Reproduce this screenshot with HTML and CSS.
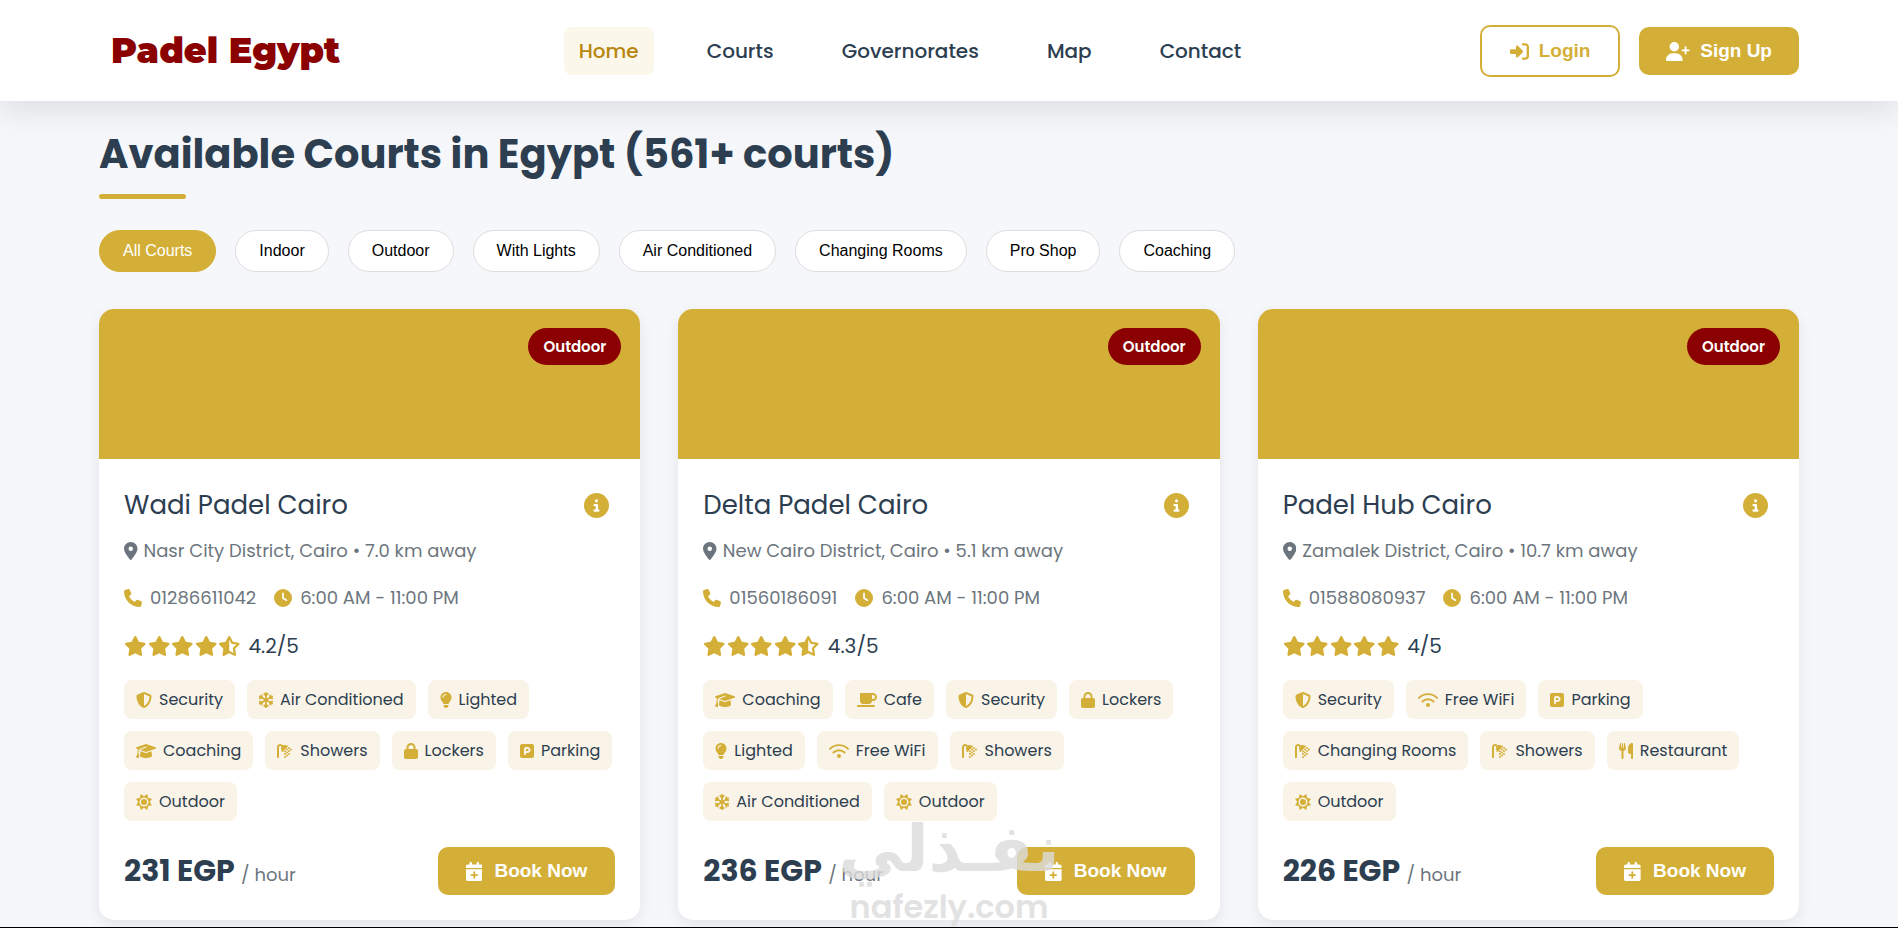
FILE: index.html
```html
<!DOCTYPE html>
<html lang="en">
<head>
<meta charset="utf-8">
<meta name="viewport" content="width=device-width, initial-scale=1">
<title>Padel Egypt</title>
<link rel="stylesheet" href="styles.css">
</head>
<body>
<svg class="sprite" aria-hidden="true">
  <defs>
    <path id="i-login" d="M217.9 105.9L340.7 228.7c7.2 7.2 11.3 17.1 11.3 27.3s-4.1 20.1-11.3 27.3L217.9 406.1c-6.4 6.4-15 9.9-24 9.9c-18.7 0-33.9-15.2-33.9-33.9l0-62.1L32 320c-17.7 0-32-14.3-32-32l0-64c0-17.7 14.3-32 32-32l128 0 0-62.1c0-18.7 15.2-33.9 33.9-33.9c9 0 17.6 3.6 24 9.9zM352 416l64 0c17.7 0 32-14.3 32-32l0-256c0-17.7-14.3-32-32-32l-64 0c-17.7 0-32-14.3-32-32s14.3-32 32-32l64 0c53 0 96 43 96 96l0 256c0 53-43 96-96 96l-64 0c-17.7 0-32-14.3-32-32s14.3-32 32-32z"/>
    <path id="i-user" d="M96 128a128 128 0 1 1 256 0A128 128 0 1 1 96 128zM0 482.3C0 383.8 79.8 304 178.3 304l91.4 0C368.2 304 448 383.8 448 482.3c0 16.4-13.3 29.7-29.7 29.7L29.7 512C13.3 512 0 498.7 0 482.3zM504 312l0-64-64 0c-13.3 0-24-10.7-24-24s10.7-24 24-24l64 0 0-64c0-13.3 10.7-24 24-24s24 10.7 24 24l0 64 64 0c13.3 0 24 10.7 24 24s-10.7 24-24 24l-64 0 0 64c0 13.3-10.7 24-24 24s-24-10.7-24-24z"/>
    <path id="i-info" d="M256 512A256 256 0 1 0 256 0a256 256 0 1 0 0 512zM216 336l24 0 0-64-24 0c-13.3 0-24-10.7-24-24s10.7-24 24-24l48 0c13.3 0 24 10.7 24 24l0 88 8 0c13.3 0 24 10.7 24 24s-10.7 24-24 24l-80 0c-13.3 0-24-10.7-24-24s10.7-24 24-24zm40-208a32 32 0 1 1 0 64 32 32 0 1 1 0-64z"/>
    <path id="i-pin" d="M215.7 499.2C267 435 384 279.4 384 192C384 86 298 0 192 0S0 86 0 192c0 87.4 117 243 168.3 307.2c12.3 15.3 35.1 15.3 47.4 0zM192 128a64 64 0 1 1 0 128 64 64 0 1 1 0-128z"/>
    <path id="i-phone" d="M164.9 24.6c-7.7-18.6-28-28.5-47.4-23.2l-88 24C12.1 30.2 0 46 0 64C0 311.4 200.6 512 448 512c18 0 33.8-12.1 38.6-29.5l24-88c5.3-19.4-4.6-39.7-23.2-47.4l-96-40c-16.3-6.8-35.2-2.1-46.3 11.6L304.7 368C234.3 334.7 177.3 277.7 144 207.3L193.3 167c13.7-11.2 18.4-30 11.6-46.3l-40-96z"/>
    <path id="i-clock" d="M256 0a256 256 0 1 1 0 512A256 256 0 1 1 256 0zM232 120l0 136c0 8 4 15.5 10.7 20l96 64c11 7.4 25.9 4.4 33.3-6.7s4.4-25.9-6.7-33.3L280 243.2 280 120c0-13.3-10.7-24-24-24s-24 10.7-24 24z"/>
    <path id="i-star" d="M316.9 18C311.6 7 300.4 0 288.1 0s-23.4 7-28.8 18L195 150.3 51.4 171.5c-12 1.8-22 10.2-25.7 21.7s-.7 24.2 7.9 32.7L137.8 329 113.2 474.7c-2 12 3 24.2 12.9 31.3s23 8 33.8 2.3l128.3-68.5 128.3 68.5c10.8 5.7 23.9 4.9 33.8-2.3s14.9-19.3 12.9-31.3L438.5 329 542.7 225.9c8.6-8.5 11.7-21.2 7.9-32.7s-13.7-19.9-25.7-21.7L381.2 150.3 316.9 18z"/>
    <path id="i-half" d="M316.9 18C311.6 7 300.4 0 288.1 0s-23.4 7-28.8 18L195 150.3 51.4 171.5c-12 1.8-22 10.2-25.7 21.7s-.7 24.2 7.9 32.7L137.8 329 113.2 474.7c-2 12 3 24.2 12.9 31.3s23 8 33.8 2.3l128.3-68.5 128.3 68.5c10.8 5.7 23.9 4.9 33.8-2.3s14.9-19.3 12.9-31.3L438.5 329 542.7 225.9c8.6-8.5 11.7-21.2 7.9-32.7s-13.7-19.9-25.7-21.7L381.2 150.3 316.9 18zM288 376.4l.1-.1 26.4 14.1 85.2 45.5-16.5-97.6-4.8-28.7 20.7-20.5 70.1-69.3-96.1-14.2-29.3-4.3-12.9-26.6L288.1 86.9l-.1 .3 0 289.2z"/>
    <path id="i-shield" d="M256 0c4.6 0 9.2 1 13.4 2.9L457.7 82.8c22 9.3 38.4 31 38.3 57.2c-.5 99.2-41.3 280.7-213.6 363.2c-16.7 8-36.1 8-52.8 0C57.3 420.7 16.5 239.2 16 140c-.1-26.2 16.3-47.9 38.3-57.2L242.7 2.9C246.8 1 251.4 0 256 0zm0 66.8l0 378.1C394 378 431.1 230.1 432 141.4L256 66.8z"/>
    <g id="i-snow" fill="none" stroke="currentColor" stroke-width="56" stroke-linecap="round" stroke-linejoin="round">
      <path id="snow-arm" d="M224 256V28M168 60l56 54 56-54M224 256v228M168 452l56-54 56 54"/>
      <use href="#snow-arm" transform="rotate(60 224 256)"/>
      <use href="#snow-arm" transform="rotate(120 224 256)"/>
    </g>
    <path id="i-bulb" d="M272 384c9.6-31.9 29.5-59.1 49.2-86.2c5.2-7.1 10.4-14.2 15.4-21.4c19.8-28.5 31.4-63 31.4-100.3C368 78.8 289.2 0 192 0S16 78.8 16 176c0 37.3 11.6 71.9 31.4 100.3c5 7.2 10.2 14.3 15.4 21.4c19.8 27.1 39.7 54.4 49.2 86.2l160 0zM192 512c44.2 0 80-35.8 80-80l0-16-160 0 0 16c0 44.2 35.8 80 80 80zM112 176c0 8.8-7.2 16-16 16s-16-7.2-16-16c0-61.9 50.1-112 112-112c8.8 0 16 7.2 16 16s-7.2 16-16 16c-44.2 0-80 35.8-80 80z"/>
    <path id="i-cap" d="M320 32c-8.1 0-16.1 1.4-23.7 4.1L15.8 137.4C6.3 140.9 0 149.9 0 160s6.3 19.1 15.8 22.6l57.9 20.9C57.3 229.3 48 259.8 48 291.9l0 28.1c0 28.4-10.8 57.7-22.3 80.8c-6.5 13-13.9 25.8-22.5 37.6C0 442.7-.9 448.3 .9 453.4s6 8.9 11.2 10.2l64 16c4.2 1.1 8.7 .3 12.4-2s6.3-6.1 7.1-10.4c8.6-42.8 4.3-81.2-2.1-108.7C90.3 344.3 86 329.8 80 316.5l0-24.6c0-30.2 10.2-58.7 27.9-81.5c12.9-15.5 29.6-28 49.2-35.7l157-61.7c8.2-3.2 17.5 .8 20.7 9s-.8 17.5-9 20.7l-157 61.7c-12.4 4.9-23.3 12.4-32.2 21.6l159.6 57.6c7.6 2.7 15.6 4.1 23.7 4.1s16.1-1.4 23.7-4.1L624.2 182.6c9.5-3.4 15.8-12.5 15.8-22.6s-6.3-19.1-15.8-22.6L343.7 36.1C336.1 33.4 328.1 32 320 32zM128 408c0 35.3 86 72 192 72s192-36.7 192-72L496.7 262.6 354.5 314c-11.1 4-22.8 6-34.5 6s-23.5-2-34.5-6L143.3 262.6 128 408z"/>
    <g id="i-shower">
      <path d="M64 131.9C64 112.1 80.1 96 99.9 96c9.5 0 18.6 3.8 25.4 10.5l16.2 16.2c-21 38.9-17.4 87.5 10.9 123L151 247c-9.4 9.4-9.4 24.6 0 33.9s24.6 9.4 33.9 0L345 121c9.4-9.4 9.4-24.6 0-33.9s-24.6-9.4-33.9 0l-1.3 1.3c-35.5-28.3-84.2-31.9-123-10.9L170.5 61.3C151.8 42.5 126.4 32 99.9 32C44.7 32 0 76.7 0 131.9L0 448c0 17.7 14.3 32 32 32s32-14.3 32-32l0-316.1z"/>
      <circle cx="256" cy="352" r="32"/><circle cx="256" cy="272" r="32"/><circle cx="320" cy="208" r="32"/><circle cx="384" cy="160" r="32"/>
      <circle cx="320" cy="400" r="32"/><circle cx="320" cy="304" r="32"/><circle cx="384" cy="256" r="32"/><circle cx="448" cy="208" r="32"/>
      <circle cx="256" cy="448" r="32"/><circle cx="384" cy="352" r="32"/>
    </g>
    <path id="i-lock" d="M144 144l0 48 160 0 0-48c0-44.2-35.8-80-80-80s-80 35.8-80 80zM80 192l0-48C80 64.5 144.5 0 224 0s144 64.5 144 144l0 48 16 0c35.3 0 64 28.7 64 64l0 192c0 35.3-28.7 64-64 64L64 512c-35.3 0-64-28.7-64-64L0 256c0-35.3 28.7-64 64-64l16 0z"/>
    <path id="i-park" d="M64 32C28.7 32 0 60.7 0 96L0 416c0 35.3 28.7 64 64 64l320 0c35.3 0 64-28.7 64-64l0-320c0-35.3-28.7-64-64-64L64 32zM192 256l48 0c17.7 0 32-14.3 32-32s-14.3-32-32-32l-48 0 0 64zm48 64l-48 0 0 32c0 17.7-14.3 32-32 32s-32-14.3-32-32l0-64 0-96c0-35.3 28.7-64 64-64l48 0c53 0 96 43 96 96s-43 96-96 96z"/>
    <path id="i-sun" d="M256 71L362 1 387 125 511 150 441 256 511 362 387 387 362 511 256 441 150 511 125 387 1 362 71 256 1 150 125 125 150 1zM256 112a144 144 0 1 0 0 288 144 144 0 1 0 0-288zM256 160a96 96 0 1 1 0 192 96 96 0 1 1 0-192z"/>
    <path id="i-cup" d="M96 64c0-17.7 14.3-32 32-32l320 0 64 0c70.7 0 128 57.3 128 128s-57.3 128-128 128l-32 0c0 53-43 96-96 96l-192 0c-53 0-96-43-96-96L96 64zM480 224l32 0c35.3 0 64-28.7 64-64s-28.7-64-64-64l-32 0 0 128zM32 416l512 0c17.7 0 32 14.3 32 32s-14.3 32-32 32L32 480c-17.7 0-32-14.3-32-32s14.3-32 32-32z"/>
    <g id="i-wifi">
      <path d="M32 188C190 28 450 28 608 188M140 304c100-98 260-98 360 0" fill="none" stroke="currentColor" stroke-width="62" stroke-linecap="round"/>
      <circle cx="320" cy="416" r="64"/>
    </g>
    <path id="i-fork" d="M416 0C400 0 288 32 288 176l0 112c0 35.3 28.7 64 64 64l32 0 0 128c0 17.7 14.3 32 32 32s32-14.3 32-32l0-128 0-112 0-208c0-17.7-14.3-32-32-32zM64 16C64 7.8 57.9 1 49.7 .1S34.2 4.6 32.4 12.5L2.1 148.8C.7 155.1 0 161.5 0 167.9c0 45.9 35.1 83.6 80 87.7L80 480c0 17.7 14.3 32 32 32s32-14.3 32-32l0-224.4c44.9-4.1 80-41.8 80-87.7c0-6.4-.7-12.8-2.1-19.1L191.6 12.5c-1.8-8-9.3-13.3-17.4-12.4S160 7.8 160 16l0 134.2c0 5.4-4.4 9.8-9.8 9.8c-5.1 0-9.3-3.9-9.8-9L127.9 14.6C127.2 6.3 120.3 0 112 0s-15.2 6.3-15.9 14.6L83.7 151c-.5 5.1-4.7 9-9.8 9c-5.4 0-9.8-4.4-9.8-9.8L64 16z"/>
    <path id="i-cal" d="M96 32l0 32L48 64C21.5 64 0 85.5 0 112l0 48 448 0 0-48c0-26.5-21.5-48-48-48l-48 0 0-32c0-17.7-14.3-32-32-32s-32 14.3-32 32l0 32L160 64l0-32c0-17.7-14.3-32-32-32S96 14.3 96 32zM448 192L0 192 0 464c0 26.5 21.5 48 48 48l352 0c26.5 0 48-21.5 48-48l0-272zM224 248c13.3 0 24 10.7 24 24l0 56 56 0c13.3 0 24 10.7 24 24s-10.7 24-24 24l-56 0 0 56c0 13.3-10.7 24-24 24s-24-10.7-24-24l0-56-56 0c-13.3 0-24-10.7-24-24s10.7-24 24-24l56 0 0-56c0-13.3 10.7-24 24-24z"/>
  </defs>
</svg>

<header class="header">
  <div class="container header-inner">
    <a class="logo" href="#">Padel Egypt</a>
    <nav class="nav">
      <a class="nav-link active" href="#">Home</a>
      <a class="nav-link" href="#courts">Courts</a>
      <a class="nav-link" href="#governorates">Governorates</a>
      <a class="nav-link" href="#map">Map</a>
      <a class="nav-link" href="#contact">Contact</a>
    </nav>
    <div class="actions">
      <button class="btn btn-outline" type="button"><svg class="icon" viewBox="0 0 512 512"><use href="#i-login"/></svg>Login</button>
      <button class="btn" type="button"><svg class="icon" viewBox="0 0 640 512"><use href="#i-user"/></svg>Sign Up</button>
    </div>
  </div>
</header>

<main class="container main" id="courts">
  <h2 class="title">Available Courts in Egypt (561+ courts)</h2>
  <div class="filters">
    <button class="filter selected" type="button">All Courts</button>
    <button class="filter" type="button">Indoor</button>
    <button class="filter" type="button">Outdoor</button>
    <button class="filter" type="button">With Lights</button>
    <button class="filter" type="button">Air Conditioned</button>
    <button class="filter" type="button">Changing Rooms</button>
    <button class="filter" type="button">Pro Shop</button>
    <button class="filter" type="button">Coaching</button>
  </div>

  <div class="grid">
    <article class="card">
      <div class="photo"><span class="badge">Outdoor</span></div>
      <div class="body">
        <div class="head"><h3 class="name">Wadi Padel Cairo</h3><button class="info" type="button" aria-label="Court details"><svg class="icon" viewBox="0 0 512 512"><use href="#i-info"/></svg></button></div>
        <p class="place"><svg class="icon" viewBox="0 0 384 512"><use href="#i-pin"/></svg>Nasr City District, Cairo • 7.0 km away</p>
        <div class="contact">
          <span class="detail"><svg class="icon" viewBox="0 0 512 512"><use href="#i-phone"/></svg>01286611042</span>
          <span class="detail"><svg class="icon" viewBox="0 0 512 512"><use href="#i-clock"/></svg>6:00 AM - 11:00 PM</span>
        </div>
        <div class="rating">
          <span class="stars"><svg class="icon" viewBox="0 0 576 512"><use href="#i-star"/></svg><svg class="icon" viewBox="0 0 576 512"><use href="#i-star"/></svg><svg class="icon" viewBox="0 0 576 512"><use href="#i-star"/></svg><svg class="icon" viewBox="0 0 576 512"><use href="#i-star"/></svg><svg class="icon" viewBox="0 0 576 512"><use href="#i-half"/></svg></span>4.2/5
        </div>
        <ul class="tags">
          <li class="tag"><svg class="icon" viewBox="0 0 512 512"><use href="#i-shield"/></svg>Security</li>
          <li class="tag"><svg class="icon" viewBox="0 0 448 512"><use href="#i-snow"/></svg>Air Conditioned</li>
          <li class="tag"><svg class="icon" viewBox="0 0 384 512"><use href="#i-bulb"/></svg>Lighted</li>
          <li class="tag"><svg class="icon" viewBox="0 0 640 512"><use href="#i-cap"/></svg>Coaching</li>
          <li class="tag"><svg class="icon" viewBox="0 0 512 512"><use href="#i-shower"/></svg>Showers</li>
          <li class="tag"><svg class="icon" viewBox="0 0 448 512"><use href="#i-lock"/></svg>Lockers</li>
          <li class="tag"><svg class="icon" viewBox="0 0 448 512"><use href="#i-park"/></svg>Parking</li>
          <li class="tag"><svg class="icon" viewBox="0 0 512 512"><use href="#i-sun"/></svg>Outdoor</li>
        </ul>
        <div class="foot">
          <p class="price">231 EGP <span class="unit">/ hour</span></p>
          <button class="btn btn-book" type="button"><svg class="icon" viewBox="0 0 448 512"><use href="#i-cal"/></svg>Book Now</button>
        </div>
      </div>
    </article>

    <article class="card">
      <div class="photo"><span class="badge">Outdoor</span></div>
      <div class="body">
        <div class="head"><h3 class="name">Delta Padel Cairo</h3><button class="info" type="button" aria-label="Court details"><svg class="icon" viewBox="0 0 512 512"><use href="#i-info"/></svg></button></div>
        <p class="place"><svg class="icon" viewBox="0 0 384 512"><use href="#i-pin"/></svg>New Cairo District, Cairo • 5.1 km away</p>
        <div class="contact">
          <span class="detail"><svg class="icon" viewBox="0 0 512 512"><use href="#i-phone"/></svg>01560186091</span>
          <span class="detail"><svg class="icon" viewBox="0 0 512 512"><use href="#i-clock"/></svg>6:00 AM - 11:00 PM</span>
        </div>
        <div class="rating">
          <span class="stars"><svg class="icon" viewBox="0 0 576 512"><use href="#i-star"/></svg><svg class="icon" viewBox="0 0 576 512"><use href="#i-star"/></svg><svg class="icon" viewBox="0 0 576 512"><use href="#i-star"/></svg><svg class="icon" viewBox="0 0 576 512"><use href="#i-star"/></svg><svg class="icon" viewBox="0 0 576 512"><use href="#i-half"/></svg></span>4.3/5
        </div>
        <ul class="tags">
          <li class="tag"><svg class="icon" viewBox="0 0 640 512"><use href="#i-cap"/></svg>Coaching</li>
          <li class="tag"><svg class="icon" viewBox="0 0 640 512"><use href="#i-cup"/></svg>Cafe</li>
          <li class="tag"><svg class="icon" viewBox="0 0 512 512"><use href="#i-shield"/></svg>Security</li>
          <li class="tag"><svg class="icon" viewBox="0 0 448 512"><use href="#i-lock"/></svg>Lockers</li>
          <li class="tag"><svg class="icon" viewBox="0 0 384 512"><use href="#i-bulb"/></svg>Lighted</li>
          <li class="tag"><svg class="icon" viewBox="0 0 640 512"><use href="#i-wifi"/></svg>Free WiFi</li>
          <li class="tag"><svg class="icon" viewBox="0 0 512 512"><use href="#i-shower"/></svg>Showers</li>
          <li class="tag"><svg class="icon" viewBox="0 0 448 512"><use href="#i-snow"/></svg>Air Conditioned</li>
          <li class="tag"><svg class="icon" viewBox="0 0 512 512"><use href="#i-sun"/></svg>Outdoor</li>
        </ul>
        <div class="foot">
          <p class="price">236 EGP <span class="unit">/ hour</span></p>
          <button class="btn btn-book" type="button"><svg class="icon" viewBox="0 0 448 512"><use href="#i-cal"/></svg>Book Now</button>
        </div>
      </div>
    </article>

    <article class="card">
      <div class="photo"><span class="badge">Outdoor</span></div>
      <div class="body">
        <div class="head"><h3 class="name">Padel Hub Cairo</h3><button class="info" type="button" aria-label="Court details"><svg class="icon" viewBox="0 0 512 512"><use href="#i-info"/></svg></button></div>
        <p class="place"><svg class="icon" viewBox="0 0 384 512"><use href="#i-pin"/></svg>Zamalek District, Cairo • 10.7 km away</p>
        <div class="contact">
          <span class="detail"><svg class="icon" viewBox="0 0 512 512"><use href="#i-phone"/></svg>01588080937</span>
          <span class="detail"><svg class="icon" viewBox="0 0 512 512"><use href="#i-clock"/></svg>6:00 AM - 11:00 PM</span>
        </div>
        <div class="rating">
          <span class="stars"><svg class="icon" viewBox="0 0 576 512"><use href="#i-star"/></svg><svg class="icon" viewBox="0 0 576 512"><use href="#i-star"/></svg><svg class="icon" viewBox="0 0 576 512"><use href="#i-star"/></svg><svg class="icon" viewBox="0 0 576 512"><use href="#i-star"/></svg><svg class="icon" viewBox="0 0 576 512"><use href="#i-star"/></svg></span>4/5
        </div>
        <ul class="tags">
          <li class="tag"><svg class="icon" viewBox="0 0 512 512"><use href="#i-shield"/></svg>Security</li>
          <li class="tag"><svg class="icon" viewBox="0 0 640 512"><use href="#i-wifi"/></svg>Free WiFi</li>
          <li class="tag"><svg class="icon" viewBox="0 0 448 512"><use href="#i-park"/></svg>Parking</li>
          <li class="tag"><svg class="icon" viewBox="0 0 512 512"><use href="#i-shower"/></svg>Changing Rooms</li>
          <li class="tag"><svg class="icon" viewBox="0 0 512 512"><use href="#i-shower"/></svg>Showers</li>
          <li class="tag"><svg class="icon" viewBox="0 0 448 512"><use href="#i-fork"/></svg>Restaurant</li>
          <li class="tag"><svg class="icon" viewBox="0 0 512 512"><use href="#i-sun"/></svg>Outdoor</li>
        </ul>
        <div class="foot">
          <p class="price">226 EGP <span class="unit">/ hour</span></p>
          <button class="btn btn-book" type="button"><svg class="icon" viewBox="0 0 448 512"><use href="#i-cal"/></svg>Book Now</button>
        </div>
      </div>
    </article>
  </div>
</main>

<div class="watermark">
  <span class="mark-ar" lang="ar" dir="rtl">نفـذلي</span>
  <span class="mark-en">nafezly.com</span>
</div>
</body>
</html>
```
FILE: styles.css
```css
:root {
  --gold: #d4af37;
  --maroon: #8b0000;
  --ink: #2c3e50;
  --grey: #6c757d;
}

* {
  box-sizing: border-box;
  margin: 0;
  padding: 0;
}

body {
  position: relative;
  min-height: 100vh;
  border-bottom: 1px solid #000;
  background: #f5f7fa;
  color: var(--ink);
  font-family: Poppins, Inter, sans-serif;
  font-size: 18px;
}

.sprite {
  position: absolute;
  width: 0;
  height: 0;
}

.icon {
  flex: none;
  height: 18px;
  fill: currentColor;
  fill-rule: evenodd;
}

.container {
  width: calc(100% - 48px);
  max-width: 1700px;
  margin: 0 auto;
}

.header {
  position: relative;
  background: #fff;
  box-shadow: 0 10px 30px rgba(0, 0, 0, 0.1);
}

.header-inner {
  display: flex;
  align-items: center;
  justify-content: space-between;
  padding: 25px 0 24px;
}

.logo {
  padding-left: 12px;
  color: var(--maroon);
  font-family: Montserrat, Inter, sans-serif;
  font-size: 35px;
  font-weight: 900;
  line-height: 48px;
  text-decoration: none;
}

.nav {
  display: flex;
  gap: 38px;
}

.nav-link {
  padding: 0 15px;
  border-radius: 8px;
  color: var(--ink);
  font-size: 20px;
  font-weight: 500;
  line-height: 48px;
  text-decoration: none;
}

.nav-link.active {
  background: #fbf7eb;
  color: #b8860b;
}

.actions {
  display: flex;
  align-items: center;
  gap: 19px;
}

.btn {
  display: flex;
  align-items: center;
  gap: 10px;
  height: 48px;
  padding: 0 27px;
  border: 0;
  border-radius: 10px;
  background: var(--gold);
  color: #fff;
  font-family: "Liberation Sans", Arial, sans-serif;
  font-size: 19px;
  font-weight: 700;
}

.btn .icon {
  height: 19px;
}

.btn-outline {
  height: 52px;
  padding: 0 28px;
  border: 2px solid var(--gold);
  background: #fff;
  color: var(--gold);
}

.btn-book {
  gap: 12px;
  padding: 0 28px;
}

.title {
  margin-top: 29px;
  font-size: 40px;
  font-weight: 700;
  line-height: 48px;
}

.title::after {
  content: "";
  display: block;
  width: 87px;
  height: 5px;
  margin-top: 16px;
  border-radius: 3px;
  background: var(--gold);
}

.filters {
  display: flex;
  flex-wrap: wrap;
  gap: 19px;
  margin: 31px 0 37px;
}

.filter {
  height: 42px;
  padding: 0 23px;
  border: 1px solid #ddd;
  border-radius: 21px;
  background: #fff;
  color: #000;
  font-family: "Liberation Sans", Arial, sans-serif;
  font-size: 16px;
}

.filter.selected {
  border-color: var(--gold);
  background: var(--gold);
  color: #fff;
}

.grid {
  display: grid;
  grid-template-columns: repeat(auto-fit, minmax(480px, 1fr));
  gap: 38px;
}

.card {
  overflow: hidden;
  border-radius: 15px;
  background: #fff;
  box-shadow: 0 5px 15px rgba(0, 0, 0, 0.08);
}

.photo {
  display: flex;
  align-items: flex-start;
  justify-content: flex-end;
  height: 150px;
  padding: 19px;
  background: var(--gold);
}

.badge {
  padding: 0 15px;
  border-radius: 19px;
  background: var(--maroon);
  color: #fff;
  font-size: 15px;
  font-weight: 600;
  line-height: 37px;
}

.body {
  padding: 26px 25px 25px;
}

.head {
  display: flex;
  align-items: center;
  justify-content: space-between;
  padding-right: 6px;
}

.name {
  font-size: 26px;
  font-weight: 400;
  line-height: 40px;
}

.info {
  display: flex;
  border: 0;
  background: none;
  color: var(--gold);
}

.info .icon {
  height: 25px;
}

.place {
  display: flex;
  align-items: center;
  gap: 6px;
  margin-top: 11px;
  color: var(--grey);
  line-height: 30px;
}

.contact {
  display: flex;
  gap: 18px;
  margin-top: 17px;
  color: var(--grey);
  line-height: 30px;
}

.detail {
  display: flex;
  align-items: center;
  gap: 8px;
}

.detail .icon {
  color: var(--gold);
}

.rating {
  display: flex;
  align-items: center;
  gap: 8px;
  margin-top: 17px;
  font-size: 20px;
  line-height: 32px;
}

.stars {
  display: flex;
  gap: 1px;
  color: var(--gold);
}

.stars .icon {
  height: 20px;
}

.tags {
  display: flex;
  flex-wrap: wrap;
  gap: 12px;
  margin-top: 18px;
  list-style: none;
}

.tag {
  display: flex;
  align-items: center;
  gap: 7px;
  padding: 0 12px;
  border-radius: 8px;
  background: #faf3e7;
  font-size: 16px;
  line-height: 39px;
}

.tag .icon {
  height: 16px;
  color: var(--gold);
}

.foot {
  display: flex;
  align-items: center;
  justify-content: space-between;
  margin-top: 26px;
}

.price {
  font-size: 30px;
  font-weight: 700;
  line-height: 48px;
}

.unit {
  color: var(--grey);
  font-size: 18px;
  font-weight: 400;
  line-height: 24px;
}

/* Site mark laid over the bottom centre of the page */
.watermark {
  position: absolute;
  right: 0;
  bottom: 0;
  left: 0;
  display: flex;
  flex-direction: column;
  gap: 8px;
  align-items: center;
  color: #dcdcdc;
  opacity: 0.8;
  pointer-events: none;
}

.mark-ar {
  font-family: "DejaVu Sans", sans-serif;
  font-size: 65px;
  font-weight: 700;
  line-height: 60px;
}

.mark-en {
  font-family: Poppins, Inter, sans-serif;
  font-size: 32px;
  font-weight: 600;
  line-height: 40px;
}
```
